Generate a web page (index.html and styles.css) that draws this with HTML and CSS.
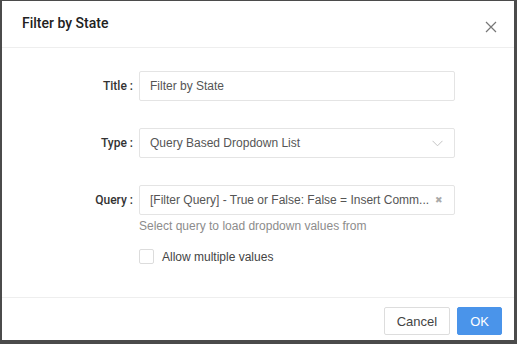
FILE: index.html
```html
<!DOCTYPE html>
<html lang="en">
<head>
    <meta charset="UTF-8">
    <title>Filter by State</title>
    <link rel="stylesheet" href="styles.css">
</head>
<body>
    <div class="modal">
        <!-- Header -->
        <div class="modal-header">
            <div class="modal-title">Filter by State</div>
            <span class="close">
                <svg width="12" height="12" viewBox="0 0 12 12"><path d="M1 1L11 11M11 1L1 11" stroke="#777" stroke-width="1.2" fill="none"/></svg>
            </span>
        </div>

        <!-- Form -->
        <div class="modal-body">
            <div class="row">
                <label class="label">Title</label>
                <div class="field">
                    <div class="input">Filter by State</div>
                </div>
            </div>
            <div class="row">
                <label class="label">Type</label>
                <div class="field">
                    <div class="input select">
                        <span>Query Based Dropdown List</span>
                        <svg width="11" height="7" viewBox="0 0 11 7"><path d="M0.5 0.8L5.5 5.8L10.5 0.8" stroke="#c4c4c4" stroke-width="1" fill="none"/></svg>
                    </div>
                </div>
            </div>
            <div class="row">
                <label class="label">Query</label>
                <div class="field">
                    <div class="input select">
                        <span>[Filter Query] - True or False: False = Insert Comm...</span>
                        <span class="clear">&#10006;</span>
                    </div>
                    <div class="help">Select query to load dropdown values from</div>
                    <label class="checkbox">
                        <span class="box"></span>
                        Allow multiple values
                    </label>
                </div>
            </div>
        </div>

        <!-- Footer -->
        <div class="modal-footer">
            <button class="btn">Cancel</button>
            <button class="btn btn-primary">OK</button>
        </div>
    </div>
</body>
</html>
```

FILE: styles.css
```css
/* General */
body {
    margin: 0;
    background: #4b4b4b;
    font-family: "Liberation Sans", Arial, sans-serif;
    color: #333;
    height: 344px;
    overflow: hidden;
}

/* Modal box */
.modal {
    margin: 1px 0 0 2px;
    width: 512px;
    height: 339px;
    background: #fff;
    display: flex;
    flex-direction: column;
}

.modal-header {
    height: 46px;
    border-bottom: 1px solid #eeeeee;
    display: flex;
    align-items: center;
    justify-content: space-between;
    padding: 0 17px 0 20px;
}

.modal-title {
    font-family: Roboto, sans-serif;
    font-size: 14px;
    font-weight: 500;
    color: #222;
    padding-bottom: 2px;
}

.close {
    display: flex;
    padding-top: 5px;
}

.modal-body {
    flex: 1;
    padding-top: 23px;
}

.row {
    display: flex;
    margin-bottom: 27px;
}
.row:last-child {
    margin-top: 1px;
}

.label {
    width: 131px;
    text-align: right;
    font-family: Roboto, sans-serif;
    font-weight: 500;
    font-size: 12px;
    color: #333;
    line-height: 30px;
    padding-right: 6px;
}
.label::after {
    content: ":";
    margin-left: 3px;
}

.field {
    width: 316px;
}

.input {
    box-sizing: border-box;
    height: 30px;
    border: 1px solid #e4e4e4;
    border-radius: 2px;
    padding: 0 10px;
    font-size: 12px;
    color: #555;
    line-height: 28px;
}

.select {
    display: flex;
    align-items: center;
    justify-content: space-between;
    padding-right: 11px;
}

.clear {
    font-size: 9px;
    color: #aaa;
}

.help {
    font-size: 12px;
    color: #8c8c8c;
    margin-top: 4px;
}

.checkbox {
    display: flex;
    align-items: center;
    margin-top: 16px;
    font-size: 12px;
    color: #444;
}
.box {
    width: 13px;
    height: 13px;
    border: 1px solid #dcdcdc;
    border-radius: 2px;
    margin-right: 8px;
}

.modal-footer {
    height: 33px;
    border-top: 1px solid #eeeeee;
    display: flex;
    justify-content: flex-end;
    align-items: flex-start;
    padding: 9px 12px 0 0;
    gap: 7px;
}

.btn {
    height: 28px;
    padding: 0 12px;
    border: 1px solid #dddddd;
    border-radius: 2px;
    background: #fff;
    font-family: "Liberation Sans", Arial, sans-serif;
    font-size: 13px;
    color: #444;
}
.btn-primary {
    background: #4a94ea;
    border-color: #4a94ea;
    color: #fff;
}
```
